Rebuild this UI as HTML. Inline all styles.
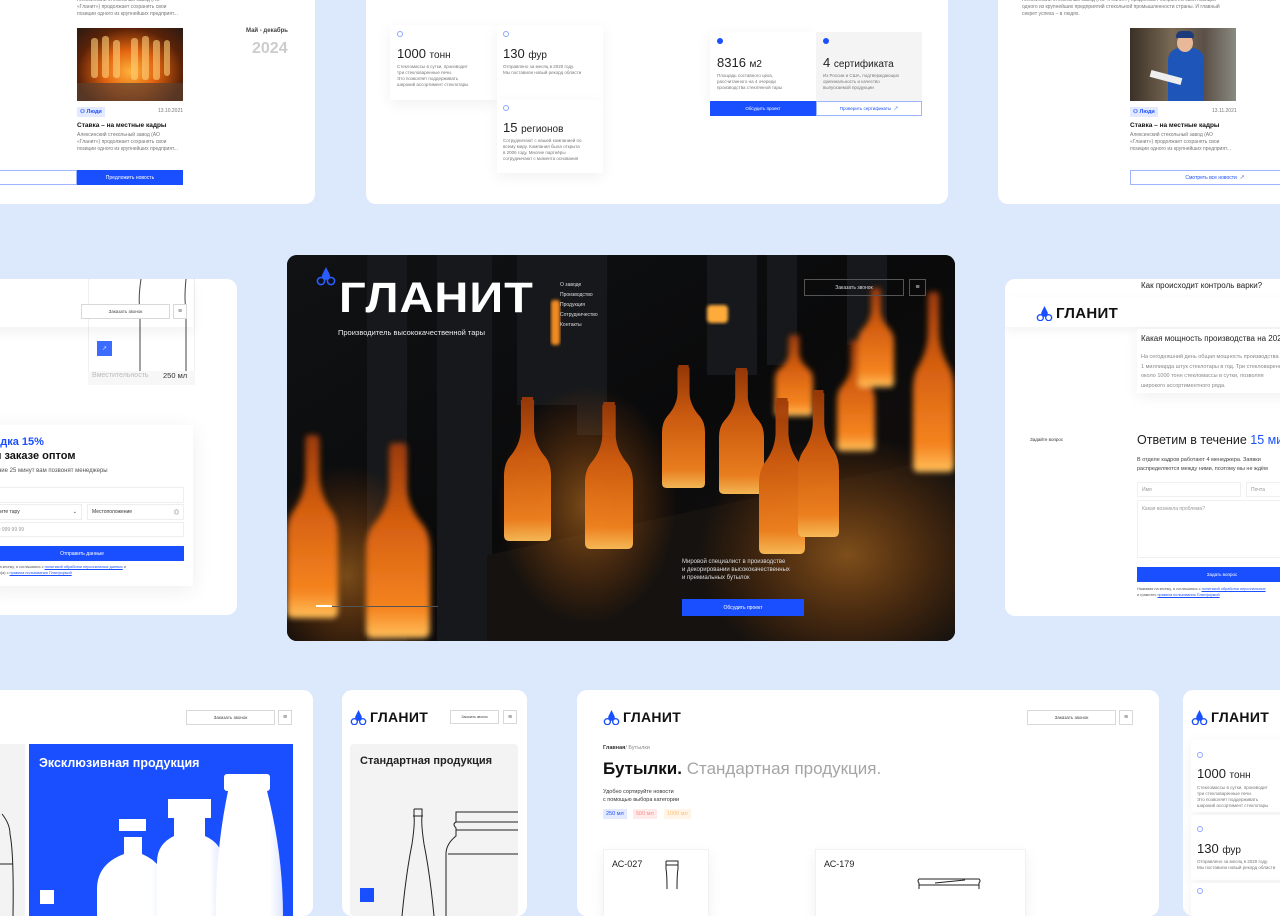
<!DOCTYPE html>
<html><head><meta charset="utf-8">
<style>
*{margin:0;padding:0;box-sizing:border-box}
body{width:1280px;height:896px;overflow:hidden;background:#dce8fc;font-family:"Liberation Sans","Noto Sans CJK SC",sans-serif;color:#111;position:relative}
.a{position:absolute}
.card{position:absolute;background:#fff;border-radius:10px;overflow:hidden}
.s{font-size:5px;line-height:7px;color:#777;white-space:nowrap}
.btnb{position:absolute;background:#1a4fff;color:#fff;font-size:5px;display:flex;align-items:center;justify-content:center}
.btno{position:absolute;border:1px solid #d8d8d8;background:#fff;color:#444;font-size:4.5px;display:flex;align-items:center;justify-content:center}
.btnl{position:absolute;border:1px solid #9db5ff;background:#fff;color:#1a4fff;font-size:5px;display:flex;align-items:center;justify-content:center}
.menu{position:absolute;border:1px solid #d8d8d8;background:#fff;display:flex;align-items:center;justify-content:center;font-size:7px;color:#666}
.logo{position:absolute;display:flex;align-items:center;gap:3px;font-weight:bold;font-size:15px;letter-spacing:0.3px;color:#111}
.box{position:absolute;background:#fff;box-shadow:0 4px 14px rgba(0,0,0,0.06)}
.dot{position:absolute;width:6px;height:6px;border:1px solid #8aa6ff;border-radius:50%}
.fdot{position:absolute;width:6px;height:6px;background:#1a4fff;border-radius:50%}
.num{position:absolute;font-size:13px;white-space:nowrap;color:#222}
.num small{font-size:10px}
.tag{position:absolute;background:#e3eaff;color:#1a4fff;font-size:5.5px;padding:2px 3px;font-weight:bold}
.inp{position:absolute;border:1px solid #eee;background:#fff;font-size:5px;color:#999;display:flex;align-items:center;padding-left:4px}
</style></head><body>

<!-- Card A -->
<div class="card" style="left:-20px;top:-20px;width:335px;height:224px">
  <div class="a s" style="left:97px;top:17px">Алексинский стекольный завод (АО<br>«Гланит») продолжает сохранять свои<br>позиции одного из крупнейших предприят...</div>
  <div class="a" style="left:97px;top:48px;width:106px;height:73px;background:radial-gradient(ellipse at 50% 60%,#ffb13b 0%,#e2630f 35%,#5a2208 70%,#2a1a14 100%)">
    <svg class="a" style="left:0;top:0" width="106" height="73"><g fill="#ffd27a" opacity="0.6"><rect x="14" y="10" width="7" height="40" rx="3"/><rect x="25" y="8" width="7" height="42" rx="3"/><rect x="36" y="12" width="7" height="38" rx="3"/><rect x="54" y="10" width="7" height="42" rx="3"/><rect x="65" y="8" width="7" height="44" rx="3"/><rect x="76" y="12" width="7" height="40" rx="3"/><rect x="87" y="12" width="6" height="36" rx="3"/></g><rect y="55" width="106" height="18" fill="#5a4030" opacity="0.7"/></svg>
  </div>
  <div class="tag" style="left:97px;top:127px">⚇ Люди</div>
  <div class="a s" style="left:178px;top:128px">13.10.2021</div>
  <div class="a" style="left:97px;top:142px;font-size:6.5px;font-weight:bold">Ставка – на местные кадры</div>
  <div class="a s" style="left:97px;top:152px">Алексинский стекольный завод (АО<br>«Гланит») продолжает сохранять свои<br>позиции одного из крупнейших предприят...</div>
  <div class="btnl" style="left:0;top:190px;width:97px;height:15px"></div>
  <div class="btnb" style="left:97px;top:190px;width:106px;height:15px">Предложить новость</div>
  <div class="a" style="left:266px;top:48px;font-size:6px;font-weight:bold;color:#444">Май - декабрь</div>
  <div class="a" style="left:272px;top:60px;font-size:16px;color:#ccc;font-weight:bold">2024</div>
</div>

<!-- Card B -->
<div class="card" style="left:366px;top:-20px;width:582px;height:224px">
  <div class="box" style="left:24px;top:45px;width:107px;height:75px"></div>
  <div class="box" style="left:131px;top:45px;width:106px;height:75px"></div>
  <div class="box" style="left:131px;top:120px;width:106px;height:73px"></div>
  <div class="dot" style="left:31px;top:51px"></div>
  <div class="num" style="left:31px;top:66px">1000 <small>тонн</small></div>
  <div class="a s" style="left:31px;top:84px;font-size:4.5px;line-height:6px">Стекломассы в сутки, производит<br>три стекловаренные печи.<br>Это позволяет поддерживать<br>широкий ассортимент стеклотары</div>
  <div class="dot" style="left:137px;top:51px"></div>
  <div class="num" style="left:137px;top:66px">130 <small>фур</small></div>
  <div class="a s" style="left:137px;top:84px;font-size:4.5px;line-height:6px">Отправлено за месяц в 2020 году.<br>Мы поставили новый рекорд области</div>
  <div class="dot" style="left:137px;top:125px"></div>
  <div class="num" style="left:137px;top:140px">15 <small>регионов</small></div>
  <div class="a s" style="left:137px;top:158px;font-size:4.5px;line-height:6px">Сотрудничают с нашей компанией по<br>всему миру. Компания была открыта<br>в 2006 году. Многие партнёры<br>сотрудничают с момента основания</div>
  <div class="box" style="left:344px;top:52px;width:106px;height:69px"></div>
  <div class="a" style="left:450px;top:52px;width:106px;height:69px;background:#f4f4f4"></div>
  <div class="fdot" style="left:351px;top:58px"></div>
  <div class="num" style="left:351px;top:75px">8316 <small>м2</small></div>
  <div class="a s" style="left:351px;top:93px;font-size:4.5px;line-height:6px">Площадь составного цеха,<br>рассчитанного на 4 очереди<br>производства стеклянной тары</div>
  <div class="fdot" style="left:457px;top:58px"></div>
  <div class="num" style="left:457px;top:75px">4 <small>сертификата</small></div>
  <div class="a s" style="left:457px;top:93px;font-size:4.5px;line-height:6px">Из России и США, подтверждающих<br>оригинальность и качество<br>выпускаемой продукции</div>
  <div class="btnb" style="left:344px;top:121px;width:106px;height:15px;font-size:4.5px">Обсудить проект</div>
  <div class="btnl" style="left:450px;top:121px;width:106px;height:15px;font-size:4.5px">Проверить сертификаты &nbsp;↗</div>
</div>

<!-- Card C -->
<div class="card" style="left:998px;top:-20px;width:300px;height:224px">
  <div class="a s" style="left:24px;top:17px">Алексинский стекольный завод (АО «Гланит») продолжает сохранять свои позиции<br>одного из крупнейших предприятий стекольной промышленности страны. И главный<br>секрет успеха – в людях.</div>
  <div class="a" style="left:132px;top:48px;width:106px;height:73px;background:linear-gradient(90deg,#3a3026,#7a6a55 40%,#5b5048 70%,#8a8a80)">
    <div class="a" style="left:38px;top:20px;width:36px;height:53px;background:#1e55b8;border-radius:12px 12px 0 0"></div>
    <div class="a" style="left:47px;top:6px;width:16px;height:18px;background:#e8b898;border-radius:50%"></div>
    <div class="a" style="left:46px;top:3px;width:18px;height:7px;background:#1d3a7a;border-radius:8px 8px 2px 2px"></div>
    <div class="a" style="left:20px;top:46px;width:32px;height:7px;background:#eee;transform:rotate(15deg)"></div>
  </div>
  <div class="tag" style="left:132px;top:127px">⚇ Люди</div>
  <div class="a s" style="left:214px;top:128px">13.11.2021</div>
  <div class="a" style="left:132px;top:142px;font-size:6.5px;font-weight:bold">Ставка – на местные кадры</div>
  <div class="a s" style="left:132px;top:152px">Алексинский стекольный завод (АО<br>«Гланит») продолжает сохранять свои<br>позиции одного из крупнейших предприят...</div>
  <div class="btnl" style="left:132px;top:190px;width:170px;height:15px">Смотреть все новости &nbsp;↗</div>
</div>

<!-- Card D -->
<div class="card" style="left:-20px;top:279px;width:257px;height:336px">
  <div class="a" style="left:108px;top:0;width:107px;height:106px;background:#fff;border:1px solid #f0f0f0"></div>
  <svg class="a" style="left:108px;top:0" width="107" height="95"><path d="M53 0 Q50 20 52 30 V92 M98 0 Q96 20 98 30 V92" stroke="#444" fill="none" stroke-width="1"/></svg>
  <div class="a" style="left:117px;top:62px;width:15px;height:15px;background:#3b6cff;color:#fff;font-size:5px;display:flex;align-items:center;justify-content:center">↗</div>
  <div class="a" style="left:108px;top:92px;width:107px;height:14px;background:#f7f7f7"></div>
  <div class="a" style="left:112px;top:93px;font-size:7px;color:#bbb">Вместительность</div>
  <div class="a" style="left:183px;top:92px;font-size:7.5px;color:#333">250 мл</div>
  <div class="a" style="left:0;top:0;width:213px;height:48px;background:#fff;box-shadow:0 6px 12px rgba(0,0,0,0.05)"></div>
  <div class="a" style="left:108px;top:0;width:107px;height:48px;border-left:1px solid #f0f0f0"></div>
  <svg class="a" style="left:108px;top:0" width="107" height="48"><path d="M53 0 Q50 20 52 30 V48 M98 0 Q96 20 98 30 V48" stroke="#444" fill="none" stroke-width="1"/></svg>
  <div class="btno" style="left:101px;top:25px;width:89px;height:15px">Заказать звонок</div>
  <div class="menu" style="left:193px;top:25px;width:14px;height:15px">≡</div>
  <div class="box" style="left:0;top:146px;width:213px;height:161px;box-shadow:0 4px 20px rgba(0,0,0,0.07)"></div>
  <div class="a" style="left:0;top:157px;font-size:11px;font-weight:bold;color:#1a4fff">Скидка 15%</div>
  <div class="a" style="left:0;top:171px;font-size:11px;font-weight:bold">При заказе оптом</div>
  <div class="a" style="left:0;top:189px;font-size:6px;color:#555">В течение 25 минут вам позвонят менеджеры</div>
  <div class="inp" style="left:0;top:208px;width:204px;height:16px"></div>
  <div class="inp" style="left:0;top:225px;width:102px;height:16px;color:#333">Выберите тару<span style="margin-left:auto;margin-right:4px">⌄</span></div>
  <div class="inp" style="left:107px;top:225px;width:97px;height:16px;color:#333">Местоположение<span style="margin-left:auto;margin-right:4px">◎</span></div>
  <div class="inp" style="left:0;top:243px;width:204px;height:15px">+7 900 999 99 99</div>
  <div class="btnb" style="left:0;top:267px;width:204px;height:15px">Отправить данные</div>
  <div class="a" style="left:0;top:286px;font-size:3.8px;line-height:5.5px;color:#555">Нажимая на кнопку, я соглашаюсь с <u style="color:#1a4fff">политикой обработки персональных данных</u> и<br>ознакомлен(а) с <u style="color:#1a4fff">правила пользования Платформой</u></div>
</div>

<!-- Hero -->
<div class="card" style="left:287px;top:255px;width:668px;height:386px;background:#0a0a0b;border-radius:10px">
  <svg class="a" style="left:0;top:0" width="668" height="386">
    <defs>
      <linearGradient id="g" x1="0" y1="0" x2="0" y2="1"><stop offset="0" stop-color="#9a3a08"/><stop offset="0.4" stop-color="#d45e10"/><stop offset="0.85" stop-color="#f58420"/><stop offset="1" stop-color="#ffc05a"/></linearGradient>
      <radialGradient id="rg"><stop offset="0" stop-color="#ff9a2a" stop-opacity="0.45"/><stop offset="1" stop-color="#ff6a00" stop-opacity="0"/></radialGradient>
      <linearGradient id="bg" x1="0" y1="0" x2="1" y2="1"><stop offset="0" stop-color="#101214"/><stop offset="0.5" stop-color="#0a0a0b"/><stop offset="1" stop-color="#17120e"/></linearGradient>
      <filter id="bl"><feGaussianBlur stdDeviation="3"/></filter>
      <filter id="bl2"><feGaussianBlur stdDeviation="1.5"/></filter>
      <path id="b" d="M38 0 H62 V6 H64 V70 Q66 100 88 125 Q100 140 100 165 V288 Q100 300 88 300 H12 Q0 300 0 288 V165 Q0 140 12 125 Q34 100 36 70 V6 H38Z"/>
    </defs>
    <rect width="668" height="386" fill="url(#bg)"/>
    <g fill="#16181b"><rect x="80" y="0" width="40" height="386"/><rect x="150" y="0" width="55" height="386"/><rect x="230" y="0" width="60" height="150"/><rect x="290" y="0" width="30" height="180"/><rect x="420" y="0" width="50" height="120"/><rect x="480" y="0" width="30" height="110"/><rect x="560" y="0" width="40" height="90"/></g>
    <path d="M200 300 L668 200 L668 386 L200 386Z" fill="#15120f"/>
    <ellipse cx="560" cy="300" rx="150" ry="120" fill="url(#rg)"/>
    <ellipse cx="300" cy="250" rx="90" ry="120" fill="url(#rg)"/>
    <ellipse cx="60" cy="320" rx="90" ry="110" fill="url(#rg)"/>
    <rect x="420" y="50" width="21" height="18" rx="4" fill="#ffab3a" filter="url(#bl2)"/>
    <rect x="264" y="45" width="9" height="45" rx="3" fill="#f08a22" filter="url(#bl2)"/>
    <g fill="url(#g)" filter="url(#bl)">
      <use href="#b" transform="translate(0,180) scale(0.51,0.61)"/>
      <use href="#b" transform="translate(79,188) scale(0.64,0.65)"/>
      <use href="#b" transform="translate(488,80) scale(0.38,0.27)"/>
      <use href="#b" transform="translate(550,85) scale(0.38,0.37)"/>
      <use href="#b" transform="translate(571,33) scale(0.36,0.33)"/>
      <use href="#b" transform="translate(626,37) scale(0.41,0.6)"/>
    </g>
    <g fill="url(#g)" opacity="0.95">
      <use href="#b" transform="translate(217,142) scale(0.47,0.48)"/>
      <use href="#b" transform="translate(298,147) scale(0.48,0.49)"/>
      <use href="#b" transform="translate(375,110) scale(0.43,0.41)"/>
      <use href="#b" transform="translate(432,113) scale(0.45,0.42)"/>
      <use href="#b" transform="translate(472,143) scale(0.46,0.52)"/>
      <use href="#b" transform="translate(511,135) scale(0.41,0.49)"/>
    </g>
    <rect x="29" y="351" width="122" height="1" fill="#555"/>
    <rect x="29" y="350" width="16" height="2" fill="#fff"/>
    <g transform="translate(29,12)"><path d="M10 0 L13.5 7 A4 4 0 1 1 6.5 7 Z" fill="#2a5cff"/><circle cx="5" cy="14" r="3.6" fill="none" stroke="#2a5cff" stroke-width="1.6"/><circle cx="15" cy="14" r="3.6" fill="none" stroke="#2a5cff" stroke-width="1.6"/></g>
  </svg>
  <div class="a" style="left:52px;top:20px;font-size:47px;font-weight:bold;color:#fff;letter-spacing:1px;line-height:50px;transform:scaleY(0.9);transform-origin:top left">ГЛАНИТ</div>
  <div class="a" style="left:51px;top:73px;font-size:7.5px;color:#eee">Производитель высококачественной тары</div>
  <div class="a" style="left:273px;top:25px;font-size:5px;line-height:10px;color:#ddd">О заводе<br>Производство<br>Продукция<br>Сотрудничество<br>Контакты</div>
  <div class="a" style="left:517px;top:24px;width:100px;height:17px;border:1px solid #555;color:#ddd;font-size:5px;display:flex;align-items:center;justify-content:center">Заказать звонок</div>
  <div class="a" style="left:622px;top:24px;width:17px;height:17px;border:1px solid #555;color:#ddd;font-size:7px;display:flex;align-items:center;justify-content:center">≡</div>
  <div class="a" style="left:395px;top:303px;font-size:6px;line-height:8px;color:#ddd">Мировой специалист в производстве<br>и декорировании высококачественных<br>и премиальных бутылок</div>
  <div class="btnb" style="left:395px;top:344px;width:122px;height:17px">Обсудить проект</div>
</div>

<!-- Card E -->
<div class="card" style="left:1005px;top:279px;width:300px;height:337px">
  <div class="a" style="left:136px;top:2px;font-size:8px;color:#222">Как происходит контроль варки?</div>
  <div class="a" style="left:0;top:18px;width:300px;height:30px;background:#fff;box-shadow:0 4px 10px rgba(0,0,0,0.05)"></div>
  <div class="logo" style="left:31px;top:26px"><svg width="17" height="15" viewBox="0 0 20 18"><path d="M10 0 L13.5 7 A4 4 0 1 1 6.5 7 Z" fill="#1a4fff"/><circle cx="5" cy="14" r="3.6" fill="none" stroke="#1a4fff" stroke-width="1.6"/><circle cx="15" cy="14" r="3.6" fill="none" stroke="#1a4fff" stroke-width="1.6"/></svg>ГЛАНИТ</div>
  <div class="box" style="left:132px;top:50px;width:170px;height:64px"></div>
  <div class="a" style="left:136px;top:55px;font-size:8px;color:#222;white-space:nowrap">Какая мощность производства на 2024?</div>
  <div class="a s" style="left:136px;top:74px;font-size:5.5px;line-height:9.5px;color:#888">На сегодняшний день общая мощность производства<br>1 миллиарда штук стеклотары в год. Три стекловаренные<br>около 1000 тонн стекломассы в сутки, позволяя<br>широкого ассортиментного ряда.</div>
  <div class="a" style="left:25px;top:158px;font-size:4.5px;color:#333">Задайте вопрос</div>
  <div class="a" style="left:132px;top:154px;font-size:12.5px;color:#222;white-space:nowrap">Ответим в течение <span style="color:#1a4fff">15 минут</span></div>
  <div class="a s" style="left:132px;top:177px;font-size:5.5px;line-height:9px;color:#444">В отделе кадров работают 4 менеджера. Заявки<br>распределяются между ними, поэтому мы не ждём</div>
  <div class="inp" style="left:132px;top:203px;width:104px;height:15px;border-color:#f0f0f0">Имя</div>
  <div class="inp" style="left:241px;top:203px;width:60px;height:15px;border-color:#f0f0f0">Почта</div>
  <div class="inp" style="left:132px;top:221px;width:170px;height:58px;border-color:#f0f0f0;align-items:flex-start;padding-top:5px">Какая возникла проблема?</div>
  <div class="btnb" style="left:132px;top:288px;width:170px;height:15px;font-size:4.5px">Задать вопрос</div>
  <div class="a" style="left:132px;top:307px;font-size:3.8px;line-height:6px;color:#555;white-space:nowrap">Нажимая на кнопку, я соглашаюсь с <u style="color:#1a4fff">политикой обработки персональных</u><br>и грамотно <u style="color:#1a4fff">правила пользования Платформой</u></div>
</div>

<!-- Card F -->
<div class="card" style="left:-20px;top:690px;width:333px;height:226px">
  <div class="btno" style="left:206px;top:20px;width:89px;height:15px">Заказать звонок</div>
  <div class="menu" style="left:298px;top:20px;width:14px;height:15px">≡</div>
  <div class="a" style="left:0;top:54px;width:45px;height:172px;background:#f3f3f3"></div>
  <svg class="a" style="left:0;top:54px" width="45" height="172"><path d="M22 70 Q30 80 30 90 Q34 110 33 172 M20 120 H33" stroke="#222" fill="none" stroke-width="1"/></svg>
  <div class="a" style="left:49px;top:54px;width:264px;height:172px;background:#1a4fff"></div>
  <div class="a" style="left:59px;top:66px;font-size:12.5px;font-weight:bold;color:#fff">Эксклюзивная продукция</div>
  <svg class="a" style="left:49px;top:54px" width="264" height="172">
    <defs><linearGradient id="w" x1="0" y1="0" x2="1" y2="0"><stop offset="0" stop-color="#fff"/><stop offset="0.8" stop-color="#fff"/><stop offset="1" stop-color="#dfe6ff"/></linearGradient></defs>
    <rect x="90" y="75" width="27" height="12" fill="#fff"/>
    <path d="M95 93 H113 V110 Q137 120 137 145 V172 H68 V145 Q68 120 95 110Z" fill="url(#w)"/>
    <rect x="139" y="55" width="43" height="19" fill="#fff"/>
    <path d="M145 74 H176 V92 Q194 100 194 118 V172 H128 V118 Q128 100 145 92Z" fill="url(#w)"/>
    <rect x="195" y="30" width="46" height="17" rx="3" fill="#fff"/>
    <path d="M199 47 H238 Q254 110 254 172 H187 Q186 110 199 47Z" fill="url(#w)"/>
    <rect x="11" y="146" width="14" height="14" fill="#fff"/>
  </svg>
</div>

<!-- Card G -->
<div class="card" style="left:342px;top:690px;width:185px;height:226px">
  <div class="logo" style="left:8px;top:19px;font-size:14px"><svg width="17" height="15" viewBox="0 0 20 18"><path d="M10 0 L13.5 7 A4 4 0 1 1 6.5 7 Z" fill="#1a4fff"/><circle cx="5" cy="14" r="3.6" fill="none" stroke="#1a4fff" stroke-width="1.6"/><circle cx="15" cy="14" r="3.6" fill="none" stroke="#1a4fff" stroke-width="1.6"/></svg>ГЛАНИТ</div>
  <div class="btno" style="left:108px;top:20px;width:49px;height:14px;font-size:3.5px">Заказать звонок</div>
  <div class="menu" style="left:161px;top:20px;width:14px;height:14px">≡</div>
  <div class="a" style="left:8px;top:54px;width:168px;height:172px;background:#f3f3f3;border-radius:4px"></div>
  <div class="a" style="left:18px;top:65px;font-size:11px;font-weight:bold;color:#222">Стандартная продукция</div>
  <svg class="a" style="left:8px;top:54px" width="168" height="172"><path d="M64 65 H72 V72 Q71 80 74 100 Q80 130 84 172 M64 65 V72 Q65 80 62 100 Q56 130 52 172 M63 72 H73" stroke="#222" fill="none" stroke-width="1"/><path d="M168 68 H106 V78 Q102 80 106 84 V92 Q96 100 96 110 V172 M98 110 H168 M106 78 H168 M106 86 H168" stroke="#222" fill="none" stroke-width="1"/><rect x="10" y="144" width="14" height="14" fill="#1a4fff"/></svg>
</div>

<!-- Card H -->
<div class="card" style="left:577px;top:690px;width:582px;height:226px">
  <div class="logo" style="left:26px;top:19px;font-size:14px"><svg width="17" height="15" viewBox="0 0 20 18"><path d="M10 0 L13.5 7 A4 4 0 1 1 6.5 7 Z" fill="#1a4fff"/><circle cx="5" cy="14" r="3.6" fill="none" stroke="#1a4fff" stroke-width="1.6"/><circle cx="15" cy="14" r="3.6" fill="none" stroke="#1a4fff" stroke-width="1.6"/></svg>ГЛАНИТ</div>
  <div class="btno" style="left:450px;top:20px;width:89px;height:15px">Заказать звонок</div>
  <div class="menu" style="left:542px;top:20px;width:14px;height:15px">≡</div>
  <div class="a" style="left:26px;top:55px;font-size:5.5px;color:#888"><b style="color:#333">Главная</b>/ Бутылки</div>
  <div class="a" style="left:26px;top:69px;font-size:17px;color:#111;white-space:nowrap"><b>Бутылки.</b> <span style="color:#a5a5a5">Стандартная продукция.</span></div>
  <div class="a" style="left:26px;top:98px;font-size:5.5px;line-height:8px;color:#333">Удобно сортируйте новости<br>с помощью выбора категории</div>
  <div class="a" style="left:26px;top:119px;background:#e3eaff;color:#1a4fff;font-size:5.5px;padding:2px 3px">250 мл</div>
  <div class="a" style="left:56px;top:119px;background:#ffeaea;color:#ff8a8a;font-size:5.5px;padding:2px 3px">500 мл</div>
  <div class="a" style="left:87px;top:119px;background:#fff4e6;color:#ffc07a;font-size:5.5px;padding:2px 3px">1000 мл</div>
  <div class="box" style="left:26px;top:159px;width:106px;height:70px;border:1px solid #f2f2f2"></div>
  <div class="a" style="left:35px;top:169px;font-size:9px;color:#222">АС-027</div>
  <svg class="a" style="left:26px;top:159px" width="106" height="40"><path d="M63 12 H75 V20 Q74 25 74 40 M63 12 V20 Q64 25 64 40 M63 16 H75" stroke="#222" fill="none" stroke-width="1"/></svg>
  <div class="box" style="left:238px;top:159px;width:211px;height:70px;border:1px solid #f2f2f2"></div>
  <div class="a" style="left:247px;top:169px;font-size:9px;color:#222">АС-179</div>
  <svg class="a" style="left:238px;top:159px" width="211" height="40"><path d="M104 40 V34 Q102 32 104 30 H164 Q166 32 164 34 V40 M104 36 H164 M120 34 L150 31" stroke="#222" fill="none" stroke-width="1"/></svg>
</div>

<!-- Card I -->
<div class="card" style="left:1183px;top:690px;width:120px;height:226px">
  <div class="logo" style="left:8px;top:19px;font-size:14px"><svg width="17" height="15" viewBox="0 0 20 18"><path d="M10 0 L13.5 7 A4 4 0 1 1 6.5 7 Z" fill="#1a4fff"/><circle cx="5" cy="14" r="3.6" fill="none" stroke="#1a4fff" stroke-width="1.6"/><circle cx="15" cy="14" r="3.6" fill="none" stroke="#1a4fff" stroke-width="1.6"/></svg>ГЛАНИТ</div>
  <div class="box" style="left:8px;top:50px;width:112px;height:72px"></div>
  <div class="box" style="left:8px;top:125px;width:112px;height:65px"></div>
  <div class="box" style="left:8px;top:193px;width:112px;height:40px"></div>
  <div class="dot" style="left:14px;top:62px"></div>
  <div class="num" style="left:14px;top:76px">1000 <small>тонн</small></div>
  <div class="a s" style="left:14px;top:95px;font-size:4.5px;line-height:6px">Стекломассы в сутки, производит<br>три стекловаренные печи.<br>Это позволяет поддерживать<br>широкий ассортимент стеклотары</div>
  <div class="dot" style="left:14px;top:136px"></div>
  <div class="num" style="left:14px;top:151px">130 <small>фур</small></div>
  <div class="a s" style="left:14px;top:169px;font-size:4.5px;line-height:6px">Отправлено за месяц в 2020 году.<br>Мы поставили новый рекорд области</div>
  <div class="dot" style="left:14px;top:198px"></div>
</div>

</body></html>
